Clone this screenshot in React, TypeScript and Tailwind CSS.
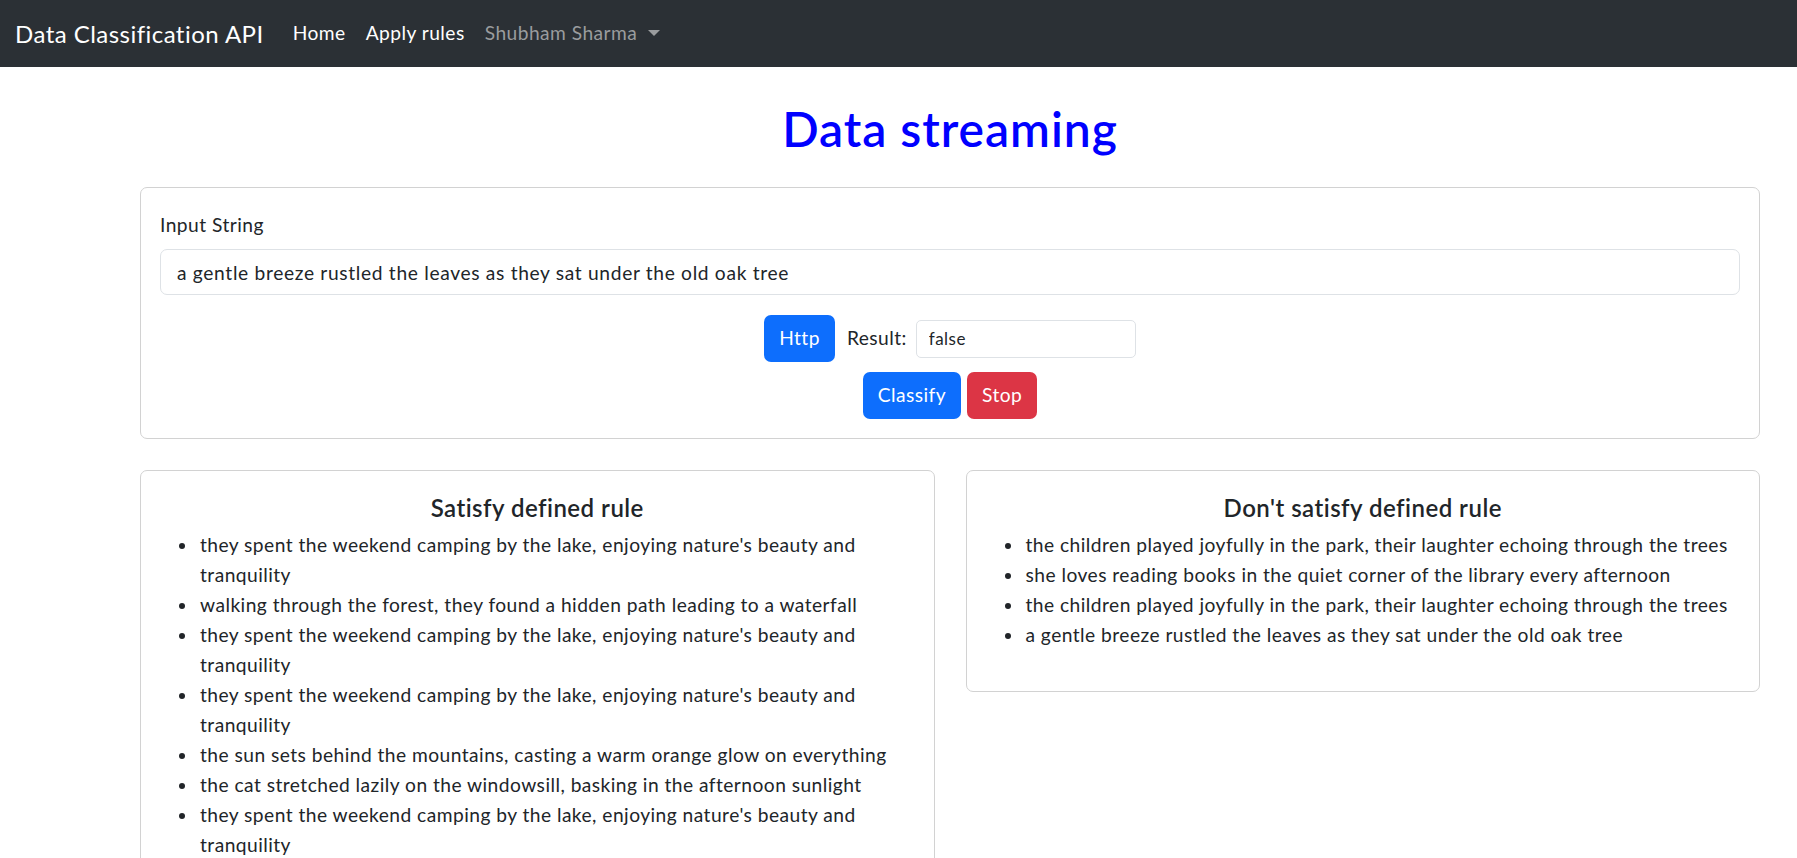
import { useState } from "react";

const SATISFIED = [
	"they spent the weekend camping by the lake, enjoying nature's beauty and tranquility",
	"walking through the forest, they found a hidden path leading to a waterfall",
	"they spent the weekend camping by the lake, enjoying nature's beauty and tranquility",
	"they spent the weekend camping by the lake, enjoying nature's beauty and tranquility",
	"the sun sets behind the mountains, casting a warm orange glow on everything",
	"the cat stretched lazily on the windowsill, basking in the afternoon sunlight",
	"they spent the weekend camping by the lake, enjoying nature's beauty and tranquility",
	"walking through the forest, they found a hidden path leading to a waterfall",
	"the sun sets behind the mountains, casting a warm orange glow on everything",
];

const NOT_SATISFIED = [
	"the children played joyfully in the park, their laughter echoing through the trees",
	"she loves reading books in the quiet corner of the library every afternoon",
	"the children played joyfully in the park, their laughter echoing through the trees",
	"a gentle breeze rustled the leaves as they sat under the old oak tree",
];

function Navbar() {
	return (
		<nav className="flex h-[67px] items-center bg-[#2b3035] px-[15px]">
			<span className="mr-[19px] text-[24px] text-white">Data Classification API</span>
			<a className="px-[10px] text-[19.2px] text-white">Home</a>
			<a className="px-[10px] text-[19.2px] text-white">Apply rules</a>
			<a className="flex items-center px-[10px] text-[19.2px] text-[#9a9c9e]">
				Shubham Sharma
				{/* dropdown caret */}
				<span className="ml-[11px] h-0 w-0 border-x-[6px] border-t-[6px] border-x-transparent border-t-[#9a9c9e]" />
			</a>
		</nav>
	);
}

function RuleCard({ title, items }: { title: string; items: string[] }) {
	return (
		<div className="rounded-[7px] border border-[#d2d2d2] px-[19px] pt-[22px] pb-[22px]">
			<h5 className="mb-[8px] text-center text-[24px] leading-[29px] font-semibold tracking-[0.02em]">{title}</h5>
			<ul className="mb-[19px] list-disc pl-[38px] leading-[30px] marker:text-[#212529]">
				{items.map((item, i) => (
					<li key={i} className="pl-[2px]">{item}</li>
				))}
			</ul>
		</div>
	);
}

export default function App() {
	const [input, setInput] = useState(
		"a gentle breeze rustled the leaves as they sat under the old oak tree"
	);

	return (
		<div className="min-h-screen bg-white font-['Lato',sans-serif] text-[19.2px] tracking-[0.024em] text-[#212529]">
			<Navbar />
			<main className="mr-[37px] ml-[140px]">
				<h1 className="mt-[33px] mb-[29px] text-center text-[48px] leading-[58px] font-semibold tracking-[0.02em] text-[#0000ff]">
					Data streaming
				</h1>

				<div className="rounded-[7px] border border-[#d2d2d2] px-[19px] pt-[22px] pb-[19px]">
					<label className="mb-[10px] block leading-[29px]">Input String</label>
					<input
						className="block h-[46px] w-full rounded-[7px] border border-[#dee2e6] px-[16px] tracking-[0.035em] outline-none"
						value={input}
						onChange={(e) => setInput(e.target.value)}
					/>
					<div className="mt-[20px] flex items-center justify-center">
						<button className="h-[47px] rounded-[7px] bg-[#0d6efd] px-[15px] text-white">Http</button>
						<span className="mr-[9px] ml-[12px]">Result:</span>
						<input
							className="h-[38px] w-[220px] rounded-[5px] border border-[#dee2e6] px-[12px] text-[17px] outline-none"
							defaultValue="false"
						/>
					</div>
					<div className="mt-[10px] flex justify-center gap-[6px]">
						<button className="h-[47px] rounded-[7px] bg-[#0d6efd] px-[15px] text-white">Classify</button>
						<button className="h-[47px] rounded-[7px] bg-[#dc3545] px-[15px] text-white">Stop</button>
					</div>
				</div>

				<div className="mt-[31px] grid grid-cols-2 items-start gap-[31px]">
					<RuleCard title="Satisfy defined rule" items={SATISFIED} />
					<RuleCard title="Don't satisfy defined rule" items={NOT_SATISFIED} />
				</div>
			</main>
		</div>
	);
}
